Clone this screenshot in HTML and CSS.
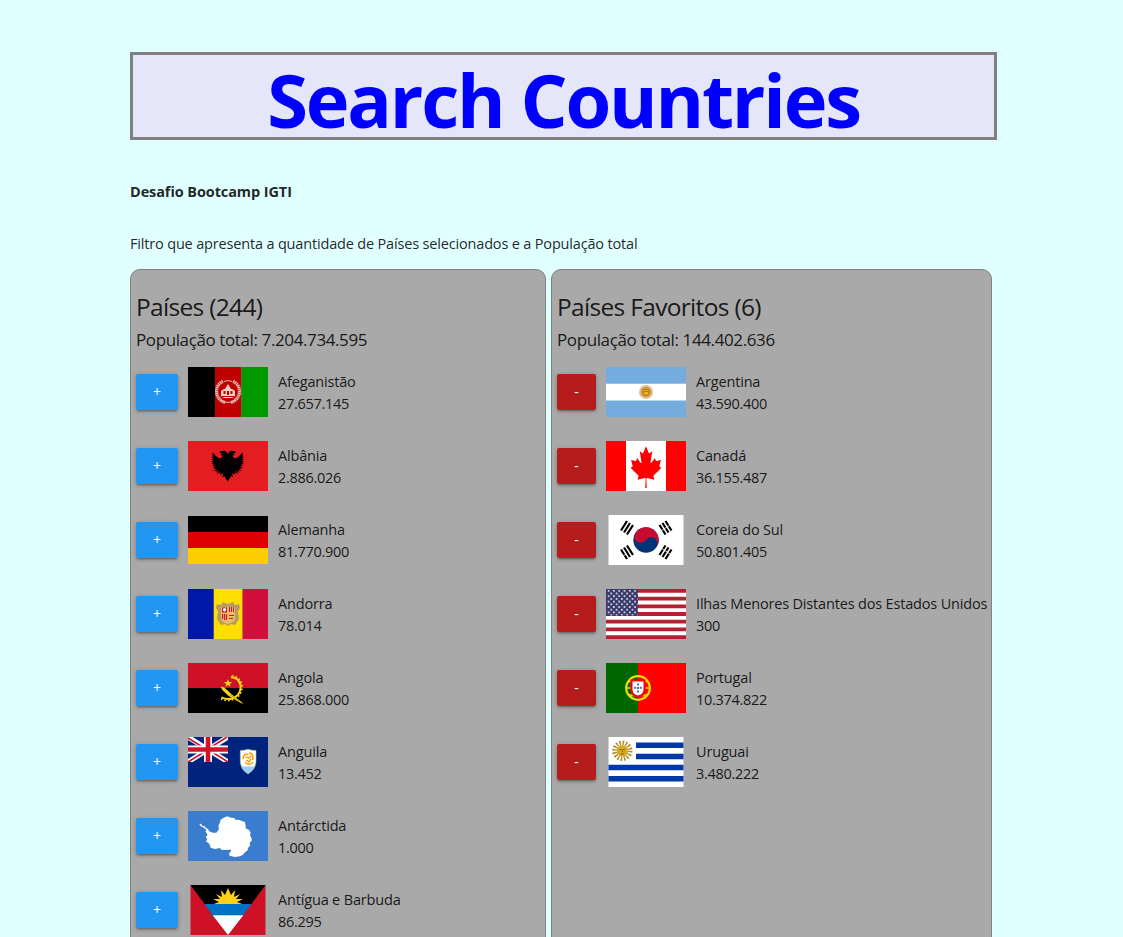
FILE: index.html
```html
<!DOCTYPE html>
<html lang="pt-BR">
<head>
<meta charset="utf-8">
<title>Search Countries</title>
<link rel="stylesheet" href="styles.css">
</head>
<body>
<main class="container">
  <h1 class="title"><span>Search Countries</span></h1>
  <p class="subtitle"><strong>Desafio Bootcamp IGTI</strong></p>
  <p class="intro">Filtro que apresenta a quantidade de Países selecionados e a População total</p>
  <div class="columns">
    <section class="panel panel-all">
      <h2>Países (244)</h2>
      <h3>População total: 7.204.734.595</h3>
      <ul>
        <li><button class="btn add">+</button>
          <svg class="flag" viewBox="0 0 80 50"><path fill="#000" d="M0 0h27v50H0z"/><path fill="#bf0000" d="M27 0h26.500v50H27z"/><path fill="#090" d="M53.500 0H80v50H53.500z"/><g fill="none" stroke="#e9b8b0"><path stroke-width="3.200" stroke-dasharray="1.500 .5" d="M35 14.500C26 18 26 32 37 35.500M45 14.500C54 18 54 32 43 35.500"/><path stroke-width="1" d="M36 14.500q4-2 8 0M33 33q7 5 14 0"/></g><path fill="#efd0c8" d="M33 29v-5l3-2h1l3-5 3 5h1l3 2v5l-3 2h-8z"/><path fill="#bf0000" d="M35.500 24h2v3h-2zM42.500 24h2v3h-2zM39 24h2v4h-2zM34 29h12v1H34z"/></svg>
          <div class="info">Afeganistão<br>27.657.145</div></li>
        <li><button class="btn add">+</button>
          <svg class="flag" viewBox="0 0 80 50"><path fill="#e41e20" d="M0 0h80v50H0z"/><g transform="scale(.33333) translate(-24 -33)"><path d="M144 72l-5-7-8-3-10 2-3 5 8 1-4 5 7 2-6 8-8-1-10-9-8-10 3 9-5-2 5 9-6-2 6 8-6-1 6 7-7 0 8 6-7 1 9 4-8 3 9 1-6 5 9-1-7 6 10-2-9 8 12-3-6 7 12-6-9 10 12-5-2 7 7-3 3 2-4 7 8-1 4 8 5 7 5-7 4-8 8 1-4-7 3-2 7 3-2-7 12 5-9-10 12 6-6-7 12 3-9-8 10 2-7-6 9 1-6-5 9-1-8-3 9-4-7-1 8-6-7 0 6-7-6 1 6-8-6 2 5-9-5 2 3-9-8 10-10 9-8 1-6-8 7-2-4-5 8-1-3-5-10-2-8 3z"/></g></svg>
          <div class="info">Albânia<br>2.886.026</div></li>
        <li><button class="btn add">+</button>
          <svg class="flag" viewBox="0 0 80 50"><path fill="#000" d="M0 1h80v16H0z"/><path fill="#d00" d="M0 17h80v16H0z"/><path fill="#ffce00" d="M0 33h80v16H0z"/></svg>
          <div class="info">Alemanha<br>81.770.900</div></li>
        <li><button class="btn add">+</button>
          <svg class="flag" viewBox="0 0 80 50"><path fill="#0018a8" d="M0 0h26v50H0z"/><path fill="#fedf00" d="M25.700 0h29v50h-29z"/><path fill="#d0103a" d="M54.500 0H80v50H54.500z"/><path fill="#b59b67" d="M29 15l4 1 2-3 5 2 5-2 2 3 4-1 1 4-2 3 1 8-2 3-2 3-4-1-3 2-3-2-4 1-2-3-2-3 1-8-2-3z"/><path fill="#e8bd65" d="M33 18h14v12q0 3-7 5-7-2-7-5z"/><path fill="#d0103a" d="M34 18.500h5v5h-5zM34 25h1.200v5H34zM36 25h1.200v6H36zM38 25h1v6h-1zM41 18h1v5h-1zM43 18h1v5h-1zM45 18h1v5h-1zM41 26h5v1h-5zM41 29h4v1h-4z"/><circle cx="36.500" cy="20.700" r="1.700" fill="#fff"/></svg>
          <div class="info">Andorra<br>78.014</div></li>
        <li><button class="btn add">+</button>
          <svg class="flag" viewBox="0 0 80 50"><path fill="#ce1126" d="M0 0h80v25H0z"/><path fill="#000" d="M0 25h80v25H0z"/><g transform="scale(.33333) translate(-24 -249)"><g fill="none" stroke="#f9d616"><path stroke-width="6" d="M153 292c22 0 32 20 28 37-5 24-31 35-57 23"/><path stroke-width="5" stroke-dasharray="5 6" d="M155 288c26 1 35 25 30 43-7 26-35 37-62 26"/></g><path fill="#f9d616" d="M144 297l3 9h10l-8 6 3 9-8-6-8 6 3-9-8-6h10zM122 320l10 2 22 20 32 25 3 5-8-4-35-20-19-18z"/><path stroke="#8a7510" stroke-width="2" d="M150 344l36 24"/></g></svg>
          <div class="info">Angola<br>25.868.000</div></li>
        <li><button class="btn add">+</button>
          <svg class="flag" viewBox="0 0 80 50"><path fill="#00247d" d="M0 0h80v50H0z"/><svg width="40" height="25" viewBox="0 0 40 25"><path stroke="#fff" stroke-width="5" d="M0 0l40 25M40 0L0 25"/><path stroke="#cf142b" stroke-width="1.600" d="M0 1l18 11.300M22 13.700L40 25M39 0L22 10.700M17 14.500L0 25"/><path stroke="#fff" stroke-width="8" d="M20 0v25M0 12.500h40"/><path stroke="#cf142b" stroke-width="4.600" d="M20 0v25M0 12.500h40"/></svg><path fill="#fff" stroke="#b7bd78" stroke-width=".6" d="M52.300 13.500q4 0 7.700-1.200Q64 13.500 68 13.500v10.500q0 8-8 13-7.700-5-7.700-13z"/><path fill="#9cf" d="M53.200 29.500h13.900Q65 33.500 60 36.700q-5-3-6.800-7.200z"/><path fill="none" stroke="#f90" stroke-width="1.500" d="M55.500 22c-1-4 2-5 5-4.500M61 16c4 0 4.500 4 3.500 7M65 25c-2 3.500-5 2.500-8 .5M57.500 20l3.500 1 2-2M63 22l-2 3-3-2"/></svg>
          <div class="info">Anguila<br>13.452</div></li>
        <li><button class="btn add">+</button>
          <svg class="flag" viewBox="0 0 80 50"><path fill="#3a7dce" d="M0 0h80v50H0z"/><path fill="#fff" transform="scale(.33333) translate(-24 -33)" d="M58 72L63 71 68 79 74 78 77 84 85 87 86 93 98 98 109 98 115 91 117 84 115 78 119 70 122 59 131 53 142 49 153 53 163 54 166 59 179 60 187 64 195 66 197 78 197 85 208 91 212 98 210 106 215 115 215 122 209 128 210 138 204 143 203 151 195 157 189 164 180 169 165 171 149 167 147 160 153 154 153 149 134 150 124 149 120 144 104 147 92 143 88 131 78 124 82 117 77 111 83 105 76 94 80 90 69 82 62 79z"/></svg>
          <div class="info">Antárctida<br>1.000</div></li>
        <li><button class="btn add">+</button>
          <svg class="flag" viewBox="0 0 80 50"><path fill="#ce1126" d="M2.500 0h75v50h-75z"/><path fill="#000" d="M2.500 0h75L63.500 19h-47z"/><path fill="#fcd116" d="M26 19l5-2-6-3 7 0-4-5 6 3-1-7 4 5 3-7 3 7 4-5-1 7 6-3-4 5 7 0-6 3 5 2z"/><path fill="#0072c6" d="M16.500 19h47l-8.200 11.300H24.700z"/><path fill="#fff" d="M24.700 30.300h30.600L40 50z"/></svg>
          <div class="info">Antígua e Barbuda<br>86.295</div></li>
      </ul>
    </section>
    <section class="panel panel-fav">
      <h2>Países Favoritos (6)</h2>
      <h3>População total: 144.402.636</h3>
      <ul>
        <li><button class="btn remove">-</button>
          <svg class="flag" viewBox="0 0 80 50"><path fill="#74acdf" d="M0 0h80v50H0z"/><path fill="#fff" d="M0 16.700h80v16.700H0z"/><circle cx="40" cy="25" r="7" fill="#e0be91"/><circle cx="40" cy="25" r="5" fill="#cf943c"/><path fill="#f6b40e" stroke="#a86614" stroke-width=".7" d="M37.500 22.500h5.200v4.500l-1 1h-3.500l-.8-1z"/><path stroke="#85340a" stroke-width=".6" d="M38.500 24.500h3.300"/></svg>
          <div class="info">Argentina<br>43.590.400</div></li>
        <li><button class="btn remove">-</button>
          <svg class="flag" viewBox="0 0 80 50"><path fill="#f00" d="M0 0h80v50H0z"/><path fill="#fff" d="M20 0h40v50H20z"/><path fill="#f00" transform="translate(40 26) scale(.0083 .0104)" d="m-90 2030 45-863a95 95 0 0 0-111-98l-859 151 116-320a65 65 0 0 0-20-73l-941-762 212-99a65 65 0 0 0 34-79l-186-572 542 115a65 65 0 0 0 73-38l105-247 423 454a65 65 0 0 0 111-57l-204-1052 327 189a65 65 0 0 0 91-27l332-652 332 652a65 65 0 0 0 91 27l327-189-204 1052a65 65 0 0 0 111 57l423-454 105 247a65 65 0 0 0 73 38l542-115-186 572a65 65 0 0 0 34 79l212 99-941 762a65 65 0 0 0-20 73l116 320-859-151a95 95 0 0 0-111 98l45 863z"/></svg>
          <div class="info">Canadá<br>36.155.487</div></li>
        <li><button class="btn remove">-</button>
          <svg class="flag" viewBox="0 0 80 50"><path fill="#fff" d="M2.500 0h75v50h-75z"/><circle cx="40" cy="25" r="12.700" fill="#003478"/><path fill="#c60c30" d="M29.400 18A12.700 12.700 0 1 1 50.600 32 6.350 6.350 0 0 0 40 25 6.350 6.350 0 0 1 29.400 18z"/><path stroke="#000" stroke-width="2.200" d="M15 15.500l6-9.500M18 17.500l6-9.500M21 19.500l6-9.500M53.500 10l6 9.500M56.500 8l6 9.500M59.500 6l6 9.500M15 34.500l6 9.500M18 32.500l6 9.500M21 30.500l6 9.500M53.500 40l6-9.500M56.500 42l6-9.500M59.500 44l6-9.500"/><path stroke="#fff" stroke-width=".8" d="M52.500 17.500l13-8.500M17 41l3-2M55 33l11 7.200"/></svg>
          <div class="info">Coreia do Sul<br>50.801.405</div></li>
        <li><button class="btn remove">-</button>
          <svg class="flag" viewBox="0 0 80 50"><defs><pattern id="stars" width="5.300" height="5.400" patternUnits="userSpaceOnUse"><circle cx="2.600" cy="1.700" r=".9" fill="#fff"/><circle cx="0" cy="4.400" r=".9" fill="#fff"/><circle cx="5.300" cy="4.400" r=".9" fill="#fff"/></pattern></defs><path fill="#fff" d="M0 0h80v50H0z"/><path stroke="#b22234" stroke-width="3.846" d="M0 1.920h80M0 9.620h80M0 17.310h80M0 25h80M0 32.690h80M0 40.380h80M0 48.080h80"/><path fill="#3c3b6e" d="M0 0h32v26.900H0z"/><path fill="url(#stars)" d="M1 .5h30.500v26H1z"/></svg>
          <div class="info">Ilhas Menores Distantes dos Estados Unidos<br>300</div></li>
        <li><button class="btn remove">-</button>
          <svg class="flag" viewBox="0 0 80 50"><path fill="#060" d="M0 0h32v50H0z"/><path fill="#f00" d="M32 0h48v50H32z"/><g fill="none" stroke="#e8e000"><circle cx="32" cy="25" r="11.800" stroke-width="2.200"/><path stroke-width="1.400" d="M20 25h24M22 18q10 4 20 0M21 31q11 4 22 0M24 16q3 10 16 18M40 16q-3 10-16 18"/></g><path fill="#fff" stroke="#f00" stroke-width="2.200" d="M25.500 17.500h13v9q0 6-6.500 7-6.500-1-6.500-7z"/><path fill="#fff" stroke="#dde" stroke-width=".5" d="M27 19h10v7q0 5-5 6-5-1-5-6z"/><path fill="#4a6db5" d="M31 20.500h2v2h-2zM31 24h2v2h-2zM31 27.500h2v2h-2zM28.200 23.800h2v2h-2zM33.800 23.800h2v2h-2z"/></svg>
          <div class="info">Portugal<br>10.374.822</div></li>
        <li><button class="btn remove">-</button>
          <svg class="flag" viewBox="0 0 80 50"><path fill="#fff" d="M2.500 0h75v50h-75z"/><path fill="#0038a8" d="M30 5.600h47.500v5.500H30zM30 16.700h47.500v5.500H30zM2.500 27.800h75v5.500h-75zM2.500 38.900h75v5.500h-75z"/><circle cx="16.300" cy="13.800" r="7.700" fill="none" stroke="#b08f28" stroke-width="5" stroke-dasharray="1.500 1.523"/><circle cx="16.300" cy="13.800" r="5.600" fill="#d5aa20"/><path fill="none" stroke="#6b510b" stroke-width=".8" d="M13.500 12.500h2M17 12.500h2M16.500 13v2M14.500 17h3.500"/></svg>
          <div class="info">Uruguai<br>3.480.222</div></li>
      </ul>
    </section>
  </div>
</main>
</body>
</html>
```
FILE: styles.css
```css
* { box-sizing: border-box; }
html, body { height: 100%; margin: 0; overflow: hidden; }
body {
  background: #e0ffff;
  color: rgba(0, 0, 0, 0.87);
  font-family: "Segoe UI", "Open Sans", "Noto Sans", sans-serif;
  font-size: 14.5px;
  line-height: 22px;
}
h1, h2, h3, p, ul { margin: 0; padding: 0; font-weight: 400; }
.container { width: 867px; height: 100%; margin: 0 0 0 130px; padding-top: 52px; overflow: hidden; }
.title {
  height: 88px;
  border: 3px solid #808080;
  background: #e6e6fa;
  color: #00f;
  font-size: 74px;
  font-weight: 700;
  line-height: 89px;
  letter-spacing: -2.2px;
  text-align: center;
  white-space: nowrap;
}
.subtitle { margin-top: 41px; letter-spacing: -0.1px; }
.subtitle strong { font-weight: 700; }
.intro { margin-top: 30px; letter-spacing: -0.17px; }
.columns { display: flex; gap: 5px; margin-top: 14px; align-items: stretch; white-space: nowrap; }
.panel {
  height: 1200px;
  padding: 20px 5px 0;
  border: 1px solid #808080;
  border-radius: 10px;
  background: #a9a9a9;
}
.panel-all { width: 416px; }
.panel-fav { width: 441px; }
.panel h2 { font-size: 24.5px; line-height: 34px; letter-spacing: -0.68px; }
.panel h3 { font-size: 17px; line-height: 24px; margin-top: 4px; letter-spacing: -0.39px; }
.panel ul { list-style: none; margin-top: 3px; }
.panel li { display: flex; align-items: center; gap: 10px; height: 74px; }
.info { padding-top: 2px; letter-spacing: -0.3px; }
.info::first-line { letter-spacing: -0.17px; }
.btn {
  flex: none;
  height: 36px;
  padding: 0;
  border: 0;
  border-radius: 2px;
  color: #fff;
  font: 400 14px/36px "Segoe UI", "Open Sans", sans-serif;
  box-shadow: 0 2px 2px rgba(0, 0, 0, .14), 0 3px 1px -2px rgba(0, 0, 0, .12), 0 1px 5px rgba(0, 0, 0, .2);
}
.add { width: 42px; background: #2196f3; }
.remove { width: 39px; background: #b71c1c; }
.flag { flex: none; display: block; width: 80px; height: 50px; }
```
